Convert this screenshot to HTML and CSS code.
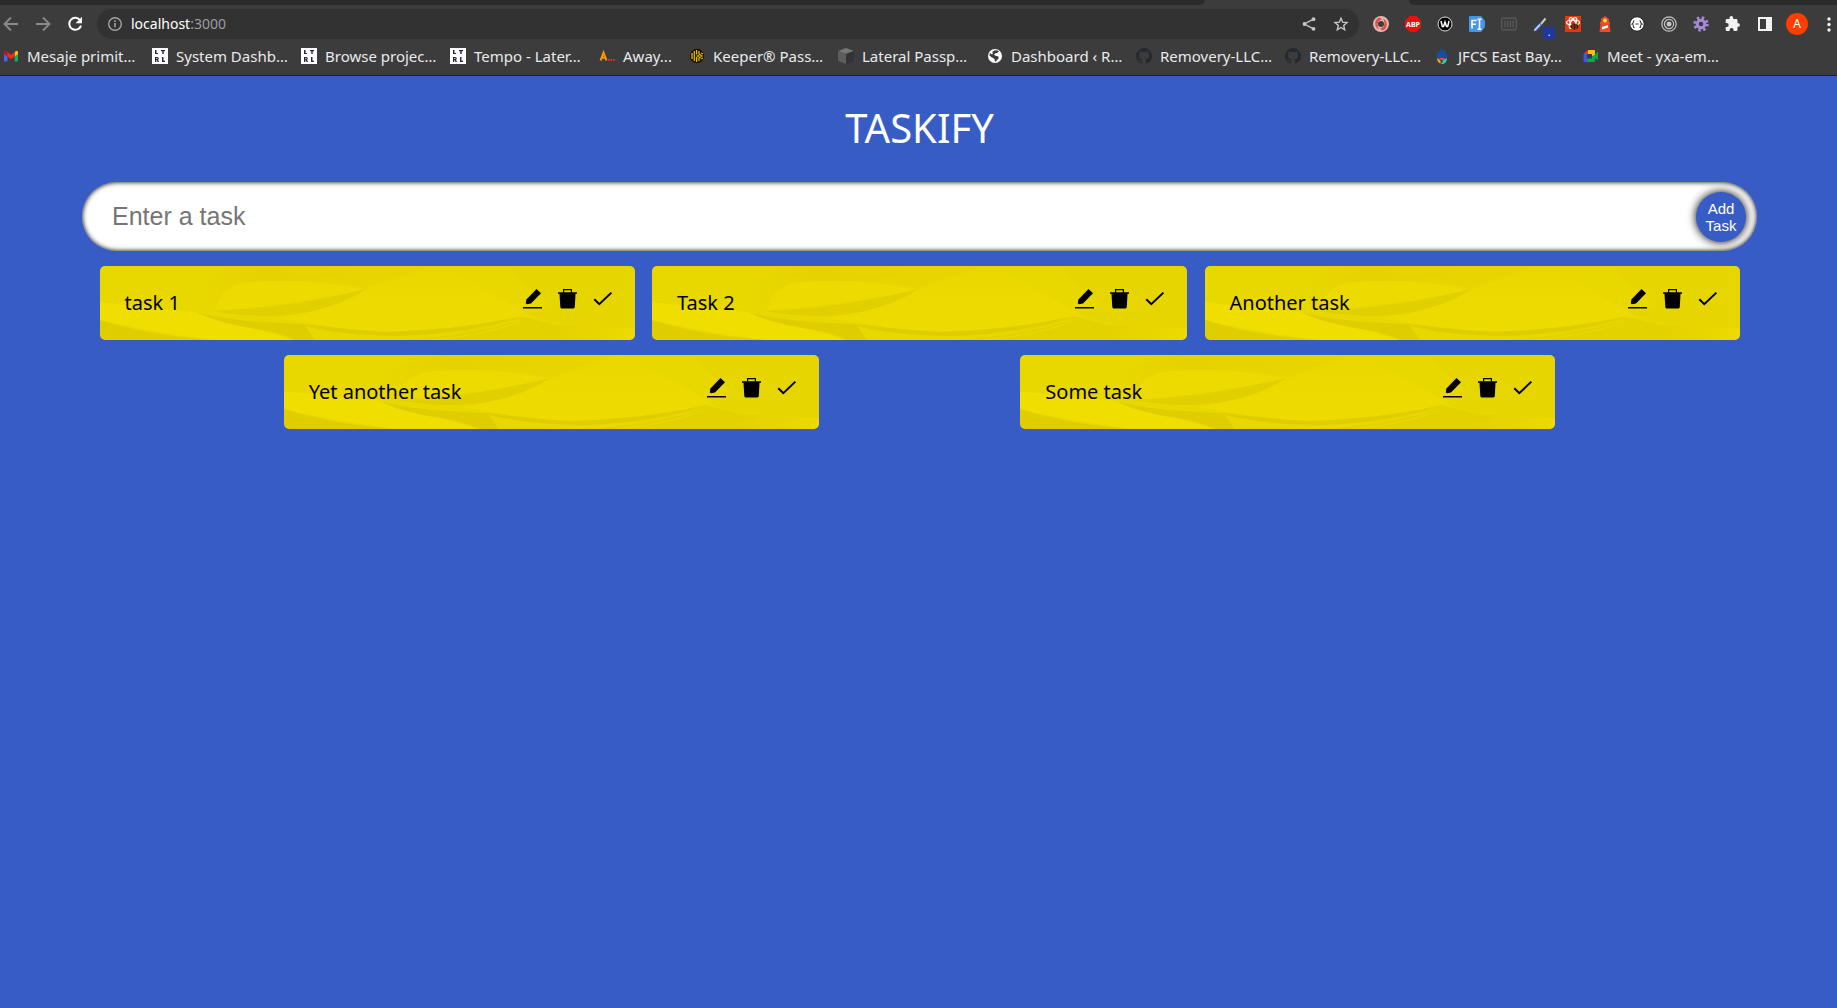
FILE: index.html
```html
<!DOCTYPE html>
<html lang="en">
<head>
<meta charset="utf-8">
<meta name="viewport" content="width=device-width, initial-scale=1">
<title>Taskify</title>
<link rel="stylesheet" href="styles.css">
</head>
<body>
<svg class="sprite" aria-hidden="true">
  <symbol id="edit" viewBox="0 0 25 25"><path d="M16.500 3 21 7.200 11 17.600 6.800 18.200 5.800 17.200 6.400 13.400Z"/><path d="M3 21h19v1.500H3z"/></symbol>
  <symbol id="trash" viewBox="0 0 25 25"><path fill-rule="evenodd" d="M8 3h9v3.200h5v1.600h-1.500L19.800 21q-.1 1.400-1.400 1.400H6.700q-1.300 0-1.400-1.400L4.500 7.800H3V6.200h5zM9.200 4.200v2h6.600v-2z"/></symbol>
  <symbol id="check" viewBox="0 0 25 25"><path d="M4.300 13.200 9.300 18.200 21.400 6.600" fill="none" stroke="#000" stroke-width="2"/></symbol>
  <symbol id="ltrl" viewBox="0 0 16 16"><path fill="#fff" d="M0 0h16v16H0z"/><g fill="#26264a"><path d="M3 2h1.500v3H6v1H3zM9 2h4v1.200h-1.300V6h-1.400V3.200H9zM10 9h1.500v3.800H13V14h-3z"/><path fill-rule="evenodd" d="M3 9h2.200q1.600 0 1.600 1.500 0 1-.8 1.300l1 2.200H5.500l-.8-1.900H4.300V14H3zM4.300 10v1.100h.6q.6 0 .6-.55T4.900 10z"/></g></symbol>
  <symbol id="github" viewBox="0 0 16 16"><path fill="#24292f" d="M8 0a8 8 0 0 0-2.530 15.590c.4.070.550-.170.550-.380v-1.490c-2.010.370-2.530-.490-2.690-.940-.090-.230-.480-.940-.820-1.130-.280-.150-.680-.520-.010-.530.630-.010 1.080.580 1.230.820.720 1.210 1.870.870 2.330.660.070-.520.280-.870.510-1.070-1.780-.2-3.640-.890-3.640-3.950 0-.870.310-1.590.820-2.150-.080-.2-.360-1.020.080-2.120 0 0 .670-.210 2.200.820a7.400 7.400 0 0 1 4 0c1.530-1.040 2.200-.820 2.200-.820.440 1.100.160 1.920.080 2.120.510.560.820 1.270.820 2.150 0 3.070-1.870 3.750-3.650 3.950.290.250.540.730.540 1.480v2.200c0 .210.150.460.550.380A8 8 0 0 0 8 0z"/></symbol>
</svg>

<header class="browser">
  <div class="tabstrip"><span class="tabs-before"></span><span class="tab-active"></span><span class="tabs-after"></span></div>
  <div class="toolbar">
    <nav class="tools" aria-label="History">
      <button class="tool" aria-label="Back"><svg viewBox="0 0 16 16"><path d="M15 8H2M8 1.500 1.500 8 8 14.500" fill="none" stroke="#8a8a8a" stroke-width="1.800"/></svg></button>
      <button class="tool" aria-label="Forward"><svg viewBox="0 0 16 16"><path d="M1 8h13M8 1.500 14.500 8 8 14.500" fill="none" stroke="#8a8a8a" stroke-width="1.800"/></svg></button>
      <button class="tool" aria-label="Reload"><svg viewBox="0 0 16 16"><path d="M13.300 4.500A6 6 0 1 0 14 9.600" fill="none" stroke="#fff" stroke-width="2"/><path d="M15 .8v6.400H8.600z" fill="#fff"/></svg></button>
    </nav>
    <div class="omnibox">
      <svg class="icon" viewBox="0 0 16 16"><circle cx="8" cy="8" r="6.300" fill="none" stroke="#a0a3a7" stroke-width="1.400"/><path fill="#a0a3a7" d="M7.200 7h1.600v4.300H7.200zM7.200 4.300h1.600v1.600H7.200z"/></svg>
      <span class="address">localhost<span class="port">:3000</span></span>
      <button class="tool" aria-label="Share"><svg viewBox="0 0 16 16"><path d="M12.500 3.200 3.500 8l9 4.800" fill="none" stroke="#c4c7ca" stroke-width="1.400"/><g fill="#c4c7ca"><circle cx="12.500" cy="3.200" r="1.900"/><circle cx="3.500" cy="8" r="1.900"/><circle cx="12.500" cy="12.800" r="1.900"/></g></svg></button>
      <button class="tool" aria-label="Bookmark this page"><svg viewBox="0 0 16 16"><path d="M8 2.200 9.700 6.200 14 6.600 10.700 9.500 11.700 13.800 8 11.500 4.300 13.800 5.300 9.500 2 6.600 6.300 6.200Z" fill="none" stroke="#c4c7ca" stroke-width="1.400"/></svg></button>
    </div>
    <div class="tools">
      <button class="tool" aria-label="Ring"><svg viewBox="0 0 16 16"><circle cx="8" cy="8" r="5.500" fill="none" stroke="#e9b3ad" stroke-width="5"/><path d="M6 1.500Q1 4 2.500 10Q4 13 6 13.500Q3.500 9 5.500 5.500Q7 3.500 9 3.500Q8 2 6 1.500zM10 14.500Q15 12 13.500 6Q12 3 10 2.500Q12.500 7 10.500 10.500Q9 12.500 7 12.500Q8 14 10 14.500z" fill="#d0564c"/></svg></button>
      <button class="tool" aria-label="Adblock Plus"><svg viewBox="0 0 16 16"><path fill="#f00d0d" d="M4.700 0h6.600L16 4.700v6.600L11.300 16H4.700L0 11.300V4.700z"/><text x="8" y="10.700" class="glyph abp">ABP</text></svg></button>
      <button class="tool" aria-label="Wave"><svg viewBox="0 0 16 16"><circle cx="8" cy="8" r="7" fill="#000" stroke="#ddd"/><path d="M4 5l1.300 5.500h1.200L8 6l1.500 4.500h1.200L12 5" fill="none" stroke="#fff" stroke-width="1.500"/></svg></button>
      <button class="tool" aria-label="Form filler"><svg viewBox="0 0 16 16"><path fill="#4596e8" d="M1 0h11l4 5v6l-4 5H1q-1 0-1-1V1q0-1 1-1z"/><path fill="none" stroke="#fff" stroke-width="1.600" d="M3 12.500V4.500h4.500M3 8.300h4M8.500 3.200h4M10.500 3.200v10M8.500 13.200h4"/></svg></button>
      <button class="tool" aria-label="Barcode"><svg viewBox="0 0 16 16"><rect x=".7" y="2.200" width="14.600" height="11.600" rx="1.500" fill="none" stroke="#5c5c5c" stroke-width="1.200"/><path d="M4 4.500v7M6.700 4.500v7M9.400 4.500v7M12 4.500v7" stroke="#5c5c5c" stroke-width="1.200"/></svg></button>
      <button class="tool badged" aria-label="Color picker"><svg viewBox="0 0 16 16"><path d="M2 14 8 8" stroke="#3d6fe0" stroke-width="3.200"/><path d="M1.300 14.700 7 8.500" stroke="#ddd" stroke-width="1.300"/><path d="M8 8 12.500 2.500" stroke="#ccc" stroke-width="2"/></svg><span class="badge">.</span></button>
      <button class="tool" aria-label="React tools"><svg viewBox="0 0 16 16"><path fill="#e23a0c" d="M0 0h16v16H0z"/><g fill="none" stroke="#fff" stroke-width="1.200"><ellipse cx="8" cy="6.500" rx="6.500" ry="2.500"/><ellipse cx="8" cy="7" rx="6" ry="2.500" transform="rotate(60 8 7)"/><ellipse cx="8" cy="7" rx="6" ry="2.500" transform="rotate(-60 8 7)"/></g><ellipse cx="9.500" cy="10.500" rx="3.800" ry="3" fill="#241a18"/><path d="M8 8v5M11 8v5" stroke="#e23a0c"/></svg></button>
      <button class="tool" aria-label="Lighthouse"><svg viewBox="0 0 16 16"><path fill="#ef4a23" d="M8 0 12 3v3h1v2h-.5l1 8h-11l1-8H3V6h1V3z"/><circle cx="8" cy="4.500" r="2" fill="#ffe14a"/><path fill="#fff" d="m5 11 6-2v2.500L5 13.500z"/></svg></button>
      <button class="tool" aria-label="JSON viewer"><svg viewBox="0 0 16 16"><circle cx="8" cy="8" r="7.200" fill="#fff" stroke="#222"/><path fill="none" stroke="#333" stroke-width="1.100" d="M5.500 4.700Q4.300 4.700 4.300 6T3.200 8Q4.300 8 4.300 10t1.200 1.300M10.500 4.700q1.200 0 1.200 1.300t1.100 2q-1.100 0-1.100 2t-1.200 1.300M6.500 8h3"/></svg></button>
      <button class="tool" aria-label="Target"><svg viewBox="0 0 16 16"><g fill="none" stroke="#c4c4c4" stroke-width="1.200"><circle cx="8" cy="8" r="7.200"/><circle cx="8" cy="8" r="4.600"/></g><circle cx="8" cy="8" r="2.500" fill="#c4c4c4"/></svg></button>
      <button class="tool" aria-label="Settings extension"><svg viewBox="0 0 16 16"><circle cx="8" cy="8" r="3.800" fill="none" stroke="#a58ad8" stroke-width="3"/><circle cx="8" cy="8" r="6.200" fill="none" stroke="#a58ad8" stroke-width="3" stroke-dasharray="2.400 2.470"/></svg></button>
      <button class="tool" aria-label="Extensions"><svg viewBox="0 0 16 16"><path fill="#f1f3f4" d="M13.500 7.300h-1V4.200q0-1.300-1.300-1.300H8.200v-1a1.800 1.800 0 0 0-3.700 0v1H1.900Q.7 2.900.7 4.200V7h1a2 2 0 0 1 0 4h-1v2.700Q.7 15 1.900 15h2.700v-1a2 2 0 0 1 4 0v1h2.600q1.300 0 1.300-1.300v-2.900h1a1.800 1.800 0 0 0 0-3.500z"/></svg></button>
      <button class="tool" aria-label="Side panel"><svg viewBox="0 0 16 16"><path fill="#f1f3f4" fill-rule="evenodd" d="M1 1h14v14H1zM3 3v10h6V3z"/></svg></button>
      <button class="tool" aria-label="Profile"><span class="avatar">A</span></button>
      <button class="tool" aria-label="Menu"><svg viewBox="0 0 16 16"><g fill="#f1f3f4"><circle cx="8" cy="3" r="1.700"/><circle cx="8" cy="8.500" r="1.700"/><circle cx="8" cy="14" r="1.700"/></g></svg></button>
    </div>
  </div>
  <nav class="bookmarks" aria-label="Bookmarks">
    <a class="bookmark" href="#"><svg class="icon" viewBox="0 0 16 16"><path fill="#4a68ee" d="M1 5l3.400 2.500V13.500H2q-1 0-1-1z"/><path fill="#14b05a" d="M15 5l-3.400 2.500V13.500H14q1 0 1-1z"/><path fill="#ffc107" d="M11.600 4 13 2.900Q15 2 15 4.500V6l-3.400 2.500z"/><path fill="#c5121d" d="M1 6V4.500Q1 2 3 2.900L4.400 4v4.500z"/><path fill="#f22c16" d="M4.400 4 8 6.700 11.600 4v4.500L8 11.200 4.400 8.500z"/></svg>Mesaje primit…</a>
    <a class="bookmark" href="#"><svg class="icon"><use href="#ltrl"/></svg>System Dashb…</a>
    <a class="bookmark" href="#"><svg class="icon"><use href="#ltrl"/></svg>Browse projec…</a>
    <a class="bookmark" href="#"><svg class="icon"><use href="#ltrl"/></svg>Tempo - Later…</a>
    <a class="bookmark short" href="#"><svg class="icon" viewBox="0 0 16 16"><path d="M1.500 12.500 4.500 4.500 7.500 12.500M2.500 9.800h4" fill="none" stroke="#ff9800" stroke-width="2"/><path fill="#e5392d" d="M9 11h1.600v1.800H9zM11.500 11h1.600v1.800h-1.600zM14 11h1.600v1.800H14z"/></svg>Away...</a>
    <a class="bookmark" href="#"><svg class="icon" viewBox="0 0 16 16"><circle cx="8" cy="8" r="7.200" fill="#151208"/><path d="M3 5v6M5.300 3v10M7.600 2v4.500M7.600 9v5M10 3v3l3 2-3 2v3M10.500 8H7.600M12 5l2 1M12 11l2-1" fill="none" stroke="#e8b708" stroke-width="1.300"/></svg>Keeper® Pass…</a>
    <a class="bookmark" href="#"><svg class="icon" viewBox="0 0 16 16"><path fill="#777" d="M8 0l8 3-8 3-8-3z"/><path fill="#5d5d5d" d="M0 3l8 3v10l-8-3z"/><path fill="#333" d="M16 3 8 6v10l8-3z"/></svg>Lateral Passp…</a>
    <a class="bookmark" href="#"><svg class="icon" viewBox="0 0 16 16"><circle cx="8" cy="8" r="7" fill="#fff"/><path fill="#3c3c3c" d="M8 2.300q3-.2 4 1.200L10 5l-2 .5L7 7l2.500 1 2 .5v2L9 13.300 8 14 7.500 11 5 9.500 2.300 7.500 3 5l2 1.500L6 5 5 4z"/></svg>Dashboard ‹ R…</a>
    <a class="bookmark" href="#"><svg class="icon"><use href="#github"/></svg>Removery-LLC…</a>
    <a class="bookmark" href="#"><svg class="icon"><use href="#github"/></svg>Removery-LLC…</a>
    <a class="bookmark" href="#"><svg class="icon" viewBox="0 0 16 16"><path fill="#174f9c" d="M4 11Q1 6 4 4l1 2q0-4 2.500-6l.8 3q2-1 2-2 2 3 1.500 5l1.200-1q.5 4-1 6z"/><path fill="#f6a01c" d="M3 10q3 1 4 4l-1 1.500Q3 14 3 10z"/><path fill="#38c4c4" d="M13 10q0 5-4 6H6q3-1 3-4z"/><path fill="#e8502c" d="M5 10h6l-3 3z"/></svg>JFCS East Bay…</a>
    <a class="bookmark" href="#"><svg class="icon" viewBox="0 0 16 16"><path fill="#e53935" d="M.5 6 5 2v4z"/><path fill="#ffc107" d="M5 2h6q1 0 1 1v4L9 9V6H5z"/><path fill="#3f55e8" d="M.5 6H4v5h1v3H1.500q-1 0-1-1z"/><path fill="#10a84e" d="M4.500 10.500H9V8l3-1 3-3.500v9L12 10v3q0 1-1 1H4.500z"/></svg>Meet - yxa-em…</a>
  </nav>
</header>

<main class="app">
  <h1 class="heading">TASKIFY</h1>
  <form class="task-form">
    <input class="task-input" type="text" placeholder="Enter a task" aria-label="Enter a task">
    <button class="add-button" type="button">Add Task</button>
  </form>
  <ul class="tasks">
    <li class="task"><span class="task-text">task 1</span><button class="action" aria-label="Edit"><svg><use href="#edit"/></svg></button><button class="action" aria-label="Delete"><svg><use href="#trash"/></svg></button><button class="action" aria-label="Done"><svg><use href="#check"/></svg></button></li>
    <li class="task"><span class="task-text">Task 2</span><button class="action" aria-label="Edit"><svg><use href="#edit"/></svg></button><button class="action" aria-label="Delete"><svg><use href="#trash"/></svg></button><button class="action" aria-label="Done"><svg><use href="#check"/></svg></button></li>
    <li class="task"><span class="task-text">Another task</span><button class="action" aria-label="Edit"><svg><use href="#edit"/></svg></button><button class="action" aria-label="Delete"><svg><use href="#trash"/></svg></button><button class="action" aria-label="Done"><svg><use href="#check"/></svg></button></li>
    <li class="task"><span class="task-text">Yet another task</span><button class="action" aria-label="Edit"><svg><use href="#edit"/></svg></button><button class="action" aria-label="Delete"><svg><use href="#trash"/></svg></button><button class="action" aria-label="Done"><svg><use href="#check"/></svg></button></li>
    <li class="task"><span class="task-text">Some task</span><button class="action" aria-label="Edit"><svg><use href="#edit"/></svg></button><button class="action" aria-label="Delete"><svg><use href="#trash"/></svg></button><button class="action" aria-label="Done"><svg><use href="#check"/></svg></button></li>
  </ul>
</main>
</body>
</html>
```
FILE: styles.css
```css
* { box-sizing: border-box; }

body {
  margin: 0;
  min-height: 100vh;
  background: #375cc6;
  font-family: "Noto Sans", sans-serif;
}

button {
  padding: 0;
  border: 0;
  background: none;
  font-family: inherit;
  cursor: pointer;
}

.sprite { display: none; }

/* Browser frame */
.browser {
  background: #3c3c3c;
  border-bottom: 1px solid #222;
  color: #e8eaed;
  overflow: hidden;
}

.tabstrip { display: flex; height: 5px; }
.tabs-before { flex: 1205; background: #2a2a2a; border-bottom-right-radius: 5px; }
.tab-active { flex: 204; }
.tabs-after { flex: 428; background: #2a2a2a; border-bottom-left-radius: 5px; }

.toolbar { display: flex; align-items: center; padding-top: 4px; }
.tools { display: flex; }
.tools:first-child { margin-left: -5px; margin-right: 6px; }
.tools:last-child { margin-left: 6px; margin-right: -8px; }

.tool {
  display: flex;
  flex: none;
  align-items: center;
  justify-content: center;
  width: 32px;
  height: 30px;
}
.tool svg, .icon { flex: none; width: 16px; height: 16px; }

.omnibox {
  display: flex;
  flex: 1;
  align-items: center;
  height: 30px;
  padding: 0 2px 0 10px;
  border-radius: 15px;
  background: #323232;
}
.address { flex: 1; margin-left: 8px; font-size: 14px; line-height: 20px; color: #fff; }
.port { color: #9a9da1; }

.glyph { fill: #fff; font-weight: 700; text-anchor: middle; }
.abp { font-size: 7px; }

.badged { position: relative; }
.badge {
  position: absolute;
  right: 2px;
  bottom: 0;
  width: 12px;
  height: 12px;
  border-radius: 2px;
  background: #2036a0;
  color: #fff;
  font-size: 10px;
  line-height: 10px;
}

.avatar {
  width: 22px;
  height: 22px;
  border-radius: 50%;
  background: #ff3d00;
  color: #fff;
  font-size: 12px;
  line-height: 22px;
}

.bookmarks {
  display: flex;
  gap: 16px;
  height: 36px;
  padding: 0 3px 2px;
}
.bookmark {
  display: flex;
  flex: none;
  align-items: center;
  gap: 8px;
  width: 133px;
  color: inherit;
  font-size: 15px;
  white-space: nowrap;
  text-decoration: none;
}
.bookmark.short { width: 74px; }

/* Task app */
.app { padding: 0 80px 0 82px; }

.heading {
  margin: 0;
  padding: 28px 0 30px;
  color: #fff;
  font-size: 40px;
  font-weight: 400;
  line-height: 48px;
  text-align: center;
}

.task-form { display: flex; align-items: center; position: relative; }

.task-input {
  width: 100%;
  height: 69px;
  padding: 0 90px 0 30px;
  border: 0;
  border-radius: 50px;
  background: #fff;
  box-shadow: inset 0 0 5px #000;
  font-family: "Liberation Sans", Arial, sans-serif;
  font-size: 25px;
}
.task-input::placeholder { color: #757575; }

/* Sits over the right end of the text box */
.add-button {
  position: absolute;
  right: 11px;
  width: 50px;
  height: 50px;
  border-radius: 50%;
  background: #375cc6;
  box-shadow: 0 0 10px #000;
  color: #fff;
  font-family: "Liberation Sans", Arial, sans-serif;
  font-size: 15px;
  line-height: 17px;
}

.tasks {
  display: flex;
  flex-wrap: wrap;
  justify-content: space-evenly;
  margin: 0;
  padding: 0;
  list-style: none;
}

.task {
  display: flex;
  align-items: flex-start;
  gap: 10px;
  width: calc(32% - 1px);
  height: 74px;
  margin-top: 15px;
  padding: 20px;
  border-radius: 5px;
  background: #e8d600 url("data:image/svg+xml,%3Csvg xmlns='http://www.w3.org/2000/svg' viewBox='0 0 535 74' preserveAspectRatio='none'%3E%3Cdefs%3E%3ClinearGradient id='a'%3E%3Cstop stop-color='%23e4d000'/%3E%3Cstop offset='1' stop-color='%23ecda00'/%3E%3C/linearGradient%3E%3ClinearGradient id='b'%3E%3Cstop stop-color='%23e9d700'/%3E%3Cstop offset='.25' stop-color='%23e5d200'/%3E%3Cstop offset='1' stop-color='%23e8d500'/%3E%3C/linearGradient%3E%3ClinearGradient id='c' x2='0' y2='1'%3E%3Cstop stop-color='%23e9d700'/%3E%3Cstop offset='1' stop-color='%23eedc00'/%3E%3C/linearGradient%3E%3C/defs%3E%3Cpath fill='%23e9d700' d='M0 0h535v74H0z'/%3E%3Cpath fill='url(%23b)' d='M128 0Q105 12 104 36L118 44Q118 18 150 16Q210 12 266 22Q310 8 330 0z'/%3E%3Cpath fill='%23ecda00' d='M116 45Q118 19 150 16Q210 12 265 24Q200 38 116 45z'/%3E%3Cpath fill='%23e2cf00' d='M114 45Q190 42 266 23Q240 46 175 50Q140 50 114 45z'/%3E%3Cpath fill='url(%23c)' d='M175 52Q235 44 265 24L340 0Q400 30 430 50Q380 62 270 66z'/%3E%3Cpath fill='%23f0de00' d='M0 36Q50 42 96 46Q140 58 195 74H110Q50 66 0 54z'/%3E%3Cpath fill='%23e0cd00' d='M0 54Q50 70 115 74H0z'/%3E%3Cpath fill='%23e0cd00' d='M96 46Q130 56 205 58Q250 64 290 66Q360 64 422 50Q370 68 300 70Q240 69 205 60L215 74H195Q180 66 150 62Q115 56 96 46z'/%3E%3Cpath fill='%23e4d100' d='M300 74Q360 70 422 50Q450 60 480 60Q455 65 450 74z'/%3E%3Cpath fill='url(%23a)' d='M450 74Q455 62 490 60L535 63V74z'/%3E%3Cpath fill='%23e5d200' d='M410 0h125v62Q470 64 425 48L455 38Q420 20 410 0z' opacity='.45'/%3E%3Cpath stroke='%23ecda00' fill='none' d='M310 73Q370 68 418 54M330 74Q380 70 420 56'/%3E%3C/svg%3E") center / 100% 100%;
}
.task-text {
  flex: 1;
  padding: 0 5px;
  font-size: 20px;
  line-height: 34px;
}
.action, .action svg { display: block; width: 25px; height: 25px; }
```
